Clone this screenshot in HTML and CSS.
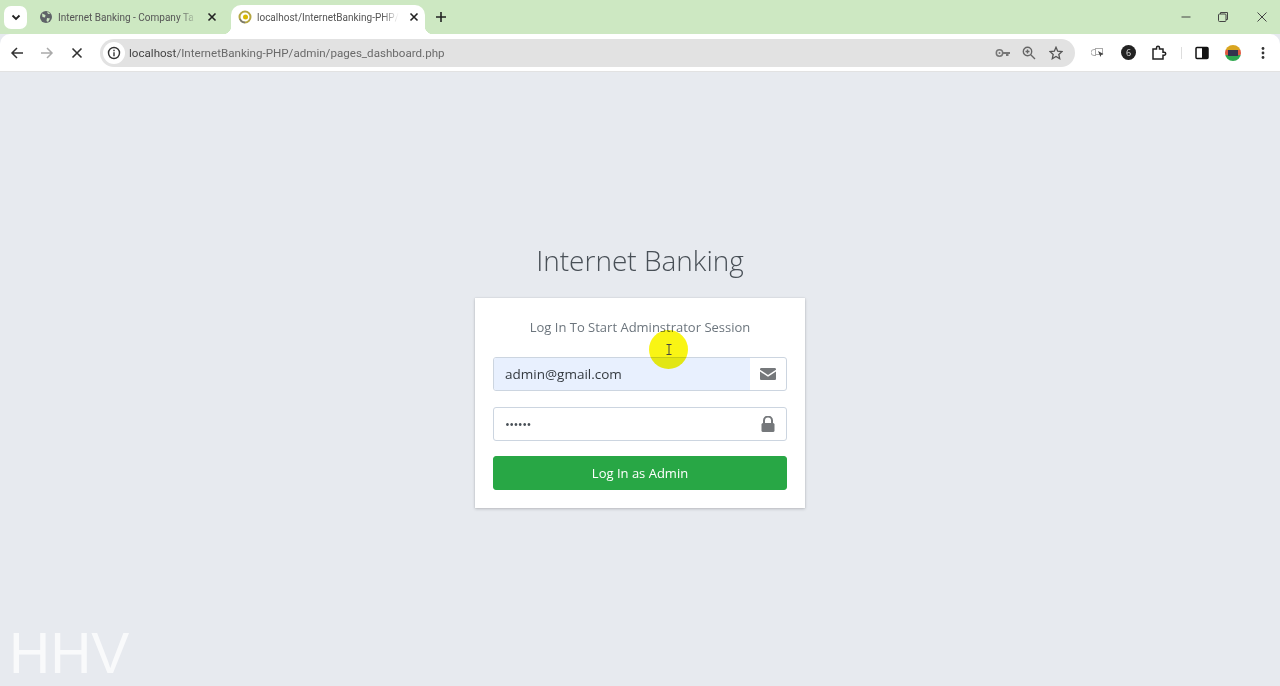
FILE: index.html
```html
<!DOCTYPE html>
<html lang="en">
<head>
    <meta charset="UTF-8">
    <title>Internet Banking</title>
    <link rel="stylesheet" href="styles.css">
</head>
<body>
    <div class="tabstrip">
        <div class="tab-search">
            <svg width="12" height="12" viewBox="0 0 12 12"><path d="M2.500 4.500 6 8l3.500-3.500" fill="none" stroke="#222" stroke-width="1.800"/></svg>
        </div>
        <div class="tab">
            <svg class="favicon" width="14" height="14" viewBox="0 0 14 14"><circle cx="7" cy="7" r="6" fill="#5f6368"/><path d="M3 3.500 6.500 5 6 7.500 3.500 7ZM8 8l3 .5L9 12 7.500 11ZM8 1.500l1 2.500 2.500-.5" fill="#cde8c2"/></svg>
            <span class="tab-title">Internet Banking - Company Ta</span>
            <svg class="tab-close" width="10" height="10" viewBox="0 0 10 10"><path d="M1.500 1.500l7 7m0-7-7 7" stroke="#222" stroke-width="1.600"/></svg>
        </div>
        <div class="tab tab-active">
            <svg class="favicon" width="14" height="14" viewBox="0 0 14 14"><circle cx="7" cy="7" r="5.500" fill="none" stroke="#b5a642" stroke-width="2"/><circle cx="7.500" cy="7" r="2.500" fill="#d9b800"/><path d="M2 9a5.500 5.500 0 0 0 5 3.500" fill="none" stroke="#777" stroke-width="1.500"/></svg>
            <span class="tab-title">localhost/InternetBanking-PHP/</span>
            <svg class="tab-close" width="10" height="10" viewBox="0 0 10 10"><path d="M1.500 1.500l7 7m0-7-7 7" stroke="#222" stroke-width="1.600"/></svg>
        </div>
        <svg class="new-tab" width="12" height="12" viewBox="0 0 12 12"><path d="M6 1v10M1 6h10" stroke="#222" stroke-width="1.600"/></svg>
        <div class="win-controls">
            <svg class="win-min" width="12" height="12" viewBox="0 0 12 12"><path d="M1.500 6h9" stroke="#444" stroke-width="1"/></svg>
            <svg class="win-max" width="12" height="12" viewBox="0 0 12 12"><rect x="1.500" y="3" width="7.500" height="7.500" rx="1" fill="none" stroke="#444"/><path d="M3.500 3V1.500h7v7H9" fill="none" stroke="#444"/></svg>
            <svg width="12" height="12" viewBox="0 0 12 12"><path d="M1.500 1.500l9 9m0-9-9 9" stroke="#444" stroke-width="1"/></svg>
        </div>
    </div>

    <div class="toolbar">
        <svg class="nav-btn" width="14" height="14" viewBox="0 0 14 14"><path d="M13 7H2M7 2 2 7l5 5" fill="none" stroke="#333" stroke-width="1.500"/></svg>
        <svg class="nav-btn" width="14" height="14" viewBox="0 0 14 14"><path d="M1 7h11M7 2l5 5-5 5" fill="none" stroke="#aaa" stroke-width="1.500"/></svg>
        <svg class="nav-btn" width="14" height="14" viewBox="0 0 14 14"><path d="M2.500 2.500l9 9m0-9-9 9" stroke="#333" stroke-width="1.600"/></svg>
        <div class="omnibox">
            <span class="site-info">
                <svg width="14" height="14" viewBox="0 0 14 14"><circle cx="7" cy="7" r="5.500" fill="none" stroke="#333" stroke-width="1.400"/><path d="M7 6.200v4M7 3.800v1.400" stroke="#333" stroke-width="1.400"/></svg>
            </span>
            <span class="url"><span class="url-host">localhost</span>/InternetBanking-PHP/admin/pages_dashboard.php</span>
            <div class="omni-icons">
                <svg class="key-icon" width="16" height="12" viewBox="0 0 16 12"><circle cx="4.500" cy="6" r="3.200" fill="none" stroke="#777" stroke-width="1.500"/><circle cx="4.500" cy="6" r="1" fill="#777"/><path d="M7.500 5H15v2h-1.500v2H11V7H7.500Z" fill="#777"/></svg>
                <svg width="14" height="14" viewBox="0 0 14 14"><circle cx="5.500" cy="5.500" r="4.200" fill="none" stroke="#666" stroke-width="1.400"/><path d="M8.500 8.500 13 13M3.500 5.500h4M5.500 3.500v4" stroke="#666" stroke-width="1.400"/></svg>
                <svg width="14" height="14" viewBox="0 0 14 14"><path d="M7 1.300 8.700 5.200l4.300.4-3.200 2.900.9 4.200L7 10.500l-3.700 2.200.9-4.200L1 5.600l4.300-.4Z" fill="none" stroke="#555" stroke-width="1.300"/></svg>
            </div>
        </div>
        <div class="ext-icons">
            <svg width="14" height="12" viewBox="0 0 14 12"><path d="M5 2.500H3a2.500 2.500 0 0 0 0 6h2" fill="none" stroke="#aaa" stroke-width="1"/><rect x="4.500" y="1.500" width="7" height="6" fill="none" stroke="#aaa"/><path d="M7 4l5.500 3-2.200.7L9.500 10Z" fill="#444"/></svg>
            <span class="ext-round">6</span>
            <svg width="16" height="16" viewBox="0 0 16 16"><path d="M2 4h3.500V2.800a1.500 1.500 0 0 1 3 0V4H12v3.200h1.200a1.500 1.500 0 0 1 0 3H12V14H2Z" fill="none" stroke="#222" stroke-width="1.500"/></svg>
            <span class="ext-sep"></span>
            <svg width="14" height="14" viewBox="0 0 14 14"><rect x="1" y="1.500" width="12" height="11" rx="1" fill="none" stroke="#111" stroke-width="1.500"/><rect x="7" y="1.500" width="6" height="11" fill="#111"/></svg>
            <span class="avatar"><span class="avatar-inner"></span></span>
            <svg class="menu-dots" width="4" height="14" viewBox="0 0 4 14"><circle cx="2" cy="2.500" r="1.400" fill="#333"/><circle cx="2" cy="7" r="1.400" fill="#333"/><circle cx="2" cy="11.500" r="1.400" fill="#333"/></svg>
        </div>
    </div>

    <div class="page">
        <h1 class="login-logo">Internet Banking</h1>
        <div class="card">
            <p class="login-msg">Log In To Start Adminstrator Session</p>
            <div class="input-group autofilled">
                <span class="input-text">admin@gmail.com</span>
                <span class="input-append">
                    <svg width="16" height="12" viewBox="0 0 16 12"><path d="M1.300 0h13.400C15.400 0 16 .6 16 1.300v.4L8 7 0 1.700v-.4C0 .6.600 0 1.300 0ZM0 3.500 8 8.800l8-5.300v7.200c0 .7-.6 1.300-1.300 1.300H1.300C.6 12 0 11.400 0 10.700Z" fill="#75787b"/></svg>
                </span>
            </div>
            <div class="input-group">
                <span class="input-dots">••••••</span>
                <span class="input-append">
                    <svg width="14" height="16" viewBox="0 0 14 16"><path d="M3 7V4.500a4 4 0 0 1 8 0V7" fill="none" stroke="#75787b" stroke-width="2"/><rect x="0.500" y="7" width="13" height="9" rx="1.500" fill="#75787b"/></svg>
                </span>
            </div>
            <button class="btn-login">Log In as Admin</button>
        </div>
        <div class="cursor-spot">
            <svg width="6" height="11" viewBox="0 0 6 11"><path d="M.5.500h5M.5 10.500h5M3 .5v10" stroke="#444" stroke-width="1" fill="none"/></svg>
        </div>
        <div class="watermark">HHV</div>
    </div>
</body>
</html>
```

FILE: styles.css
```css
* {
    box-sizing: border-box;
}
html, body {
    margin: 0;
    height: 100%;
    overflow: hidden;
}
body {
    font-family: "Open Sans", "Noto Sans", sans-serif;
    background-color: #e7eaef;
    display: flex;
    flex-direction: column;
}

/* tab strip */
.tabstrip {
    height: 34px;
    background-color: #cde8c2;
    display: flex;
    align-items: center;
    flex-shrink: 0;
}
.tab-search {
    width: 23px;
    height: 23px;
    margin-left: 4px;
    background-color: #fff;
    border-radius: 7px;
    display: flex;
    align-items: center;
    justify-content: center;
}
.tab {
    width: 204px;
    height: 34px;
    padding: 0 14px 0 12px;
    display: flex;
    align-items: center;
    color: #555;
}
.tab-active {
    position: relative;
    background-color: #fff;
    border-radius: 10px 10px 0 0;
    margin-top: 5px;
    height: 29px;
    width: 194px;
    padding: 0 9px 5px 7px;
    padding-right: 9px;
}
.tab-active::before,
.tab-active::after {
    content: "";
    position: absolute;
    bottom: 0;
    width: 8px;
    height: 8px;
}
.tab-active::before {
    left: -8px;
    background: radial-gradient(circle at 0 0, transparent 8px, #fff 8.500px);
}
.tab-active::after {
    right: -8px;
    background: radial-gradient(circle at 100% 0, transparent 8px, #fff 8.500px);
}
.favicon {
    flex-shrink: 0;
}
.tab-title {
    flex: 1;
    margin: 0 10px 0 5px;
    white-space: nowrap;
    font-family: "Roboto", sans-serif;
    font-size: 10px;
    -webkit-mask-image: linear-gradient(to right, #000 88%, transparent);
    mask-image: linear-gradient(to right, #000 88%, transparent);
}
.tab-close {
    flex-shrink: 0;
}
.new-tab {
    margin-left: 10px;
}
.win-controls {
    margin-left: auto;
    display: flex;
    padding-right: 12px;
}
.win-min {
    margin-right: 25px;
}
.win-max {
    margin-right: 27px;
}

/* toolbar */
.toolbar {
    height: 38px;
    background-color: #fff;
    border-radius: 10px 10px 0 0;
    display: flex;
    align-items: center;
    padding: 0 11px 0 10px;
    flex-shrink: 0;
    border-bottom: 1px solid #e2e2e2;
}
.nav-btn {
    margin-right: 16px;
}
.omnibox {
    width: 975px;
    height: 28px;
    background-color: #e2e2e2;
    border-radius: 14px;
    display: flex;
    align-items: center;
    padding: 0 12px 0 3px;
}
.site-info {
    width: 22px;
    height: 22px;
    border-radius: 50%;
    background-color: #fff;
    display: flex;
    align-items: center;
    justify-content: center;
}
.url {
    margin-left: 4px;
    font-family: "Roboto", sans-serif;
    font-size: 11.600px;
    color: #6a6a6a;
}
.url-host {
    color: #444;
}
.omni-icons {
    margin-left: auto;
    display: flex;
    align-items: center;
    gap: 13px;
}
.key-icon {
    margin-right: -2px;
}
.ext-icons {
    display: flex;
    align-items: center;
    margin-left: 16px;
    gap: 16px;
}
.ext-round {
    width: 15px;
    height: 15px;
    border-radius: 50%;
    background-color: #222;
    color: #ddd;
    font-size: 9px;
    text-align: center;
    line-height: 15px;
    margin-right: -1px;
}
.ext-sep {
    width: 1px;
    height: 12px;
    background-color: #ddd;
    margin: 0 -3px 0 -2px;
}
.avatar {
    width: 16px;
    height: 16px;
    border-radius: 50%;
    background: linear-gradient(#d9a520 0 30%, #e05a40 30% 65%, #2fa84f 65%);
    display: flex;
    align-items: center;
    justify-content: center;
}
.avatar-inner {
    width: 10px;
    height: 6px;
    background-color: #33334d;
}
.menu-dots {
    margin-left: 4px;
}

/* login */
.page {
    flex: 1;
    position: relative;
    display: flex;
    flex-direction: column;
    align-items: center;
    padding-top: 170px;
}
.login-logo {
    margin: 0 0 20px;
    font-size: 28px;
    font-weight: 300;
    line-height: 36px;
    color: #495057;
}
.card {
    width: 330px;
    height: 210px;
    background-color: #fff;
    box-shadow: 0 0 1px rgba(0,0,0,.125), 0 1px 3px rgba(0,0,0,.2);
    padding: 20px 18px 18px;
}
.login-msg {
    margin: 0 0 21px;
    text-align: center;
    font-size: 13px;
    line-height: 18px;
    color: #6c757d;
}
.input-group {
    height: 34px;
    border: 1px solid #ccd5e0;
    border-radius: 3px;
    display: flex;
    align-items: center;
    margin-bottom: 15px;
    overflow: hidden;
}
.autofilled {
    margin-bottom: 16px;
}
.input-text {
    flex: 1;
    height: 100%;
    padding-left: 11px;
    line-height: 33px;
    font-size: 13.500px;
    color: #343a40;
}
.input-dots {
    flex: 1;
    padding-left: 11px;
    font-size: 13px;
    letter-spacing: -0.600px;
    color: #495057;
}
.autofilled .input-text {
    background-color: #e8f0fe;
}
.input-append {
    width: 36px;
    display: flex;
    justify-content: center;
}
.btn-login {
    display: block;
    width: 100%;
    height: 34px;
    border: 1px solid #28a745;
    border-radius: 3px;
    background-color: #28a745;
    color: #fff;
    font-family: inherit;
    font-size: 13px;
}

/* overlays */
.cursor-spot {
    position: absolute;
    left: 649px;
    top: 258px;
    width: 39px;
    height: 39px;
    border-radius: 50%;
    background-color: #f9f514;
    mix-blend-mode: multiply;
    display: flex;
    align-items: center;
    justify-content: center;
}
.watermark {
    position: absolute;
    left: 9px;
    top: 546px;
    font-family: "Liberation Sans", sans-serif;
    font-size: 57px;
    line-height: 70px;
    color: rgba(255,255,255,.75);
}
```
